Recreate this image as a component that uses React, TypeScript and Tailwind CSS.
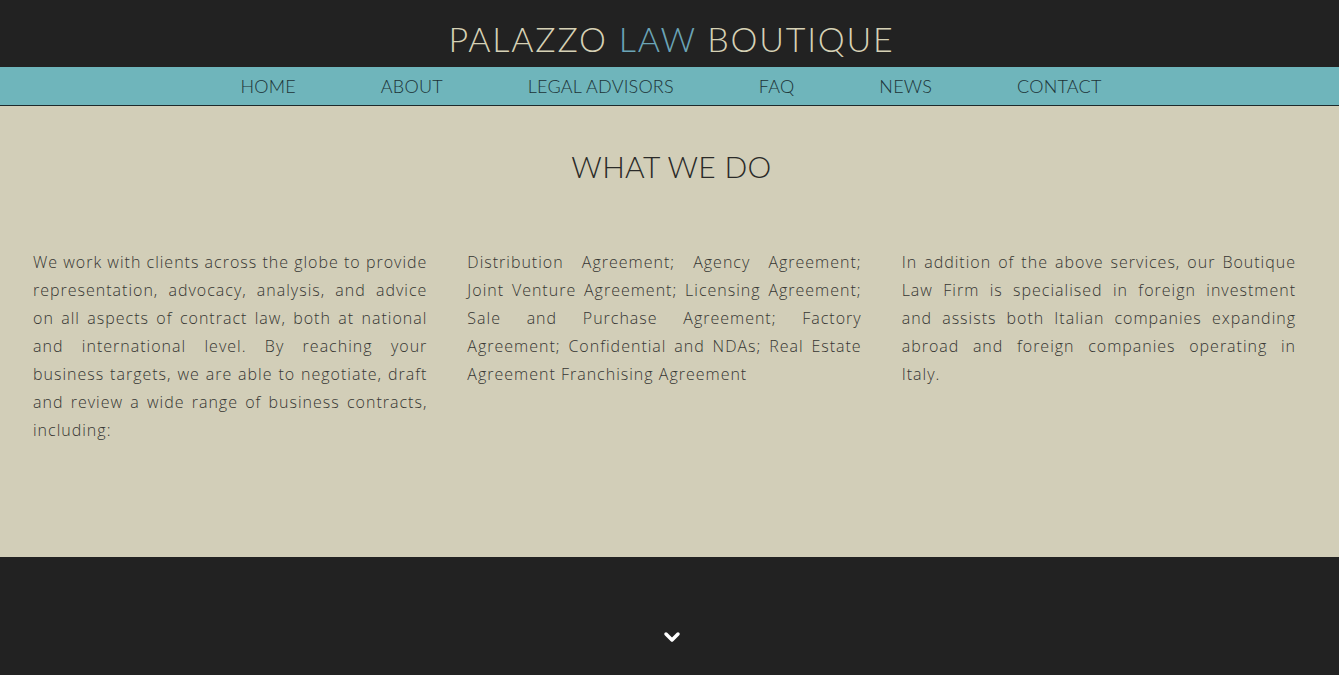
import { ChevronDown } from "lucide-react";

const navItems = ["HOME", "ABOUT", "LEGAL ADVISORS", "FAQ", "NEWS", "CONTACT"];

const columns = [
  "We work with clients across the globe to provide representation, advocacy, analysis, and advice on all aspects of contract law, both at national and international level. By reaching your business targets, we are able to negotiate, draft and review a wide range of business contracts, including:",
  "Distribution Agreement; Agency Agreement; Joint Venture Agreement; Licensing Agreement; Sale and Purchase Agreement; Factory Agreement; Confidential and NDAs; Real Estate Agreement Franchising Agreement",
  "In addition of the above services, our Boutique Law Firm is specialised in foreign investment and assists both Italian companies expanding abroad and foreign companies operating in Italy.",
];

export default function App() {
  return (
    <div className="min-h-screen bg-[#222222] font-['Open_Sans',sans-serif]">
      <header className="h-[67px] flex items-center justify-center">
        <h1 className="font-['Lato',sans-serif] font-light text-[34px] tracking-[1.8px] text-[#d6d1b5] leading-none pt-[10px] pl-[4px]">
          PALAZZO <span className="text-[#6ba4b6]">LAW</span> BOUTIQUE
        </h1>
      </header>

      <nav className="h-[39px] bg-[#6fb5bb] border-b border-[#1e2a2c] flex items-center justify-center gap-[85px] pl-[3px]">
        {navItems.map((item) => (
          <a
            key={item}
            href="#"
            className="font-['Lato',sans-serif] font-light text-[18px] tracking-[0.2px] text-[#1c3337] leading-none"
          >
            {item}
          </a>
        ))}
      </nav>

      <main className="bg-[#d2ceb8] h-[451px] pl-[33px] pr-[43px]">
        <h2 className="text-center font-['Lato',sans-serif] font-light text-[30px] tracking-[0.3px] text-[#2a2a28] pt-[45px] leading-none pl-[14px]">
          WHAT WE DO
        </h2>
        <div className="grid grid-cols-3 gap-x-[40px] mt-[67px]">
          {columns.map((text, index) => (
            <p
              key={index}
              className="text-justify text-[16px] leading-[28px] font-light tracking-[1px] text-[#363633]"
            >
              {text}
            </p>
          ))}
        </div>
      </main>

      <footer className="h-[118px] flex justify-center pt-[68px] pl-[4px]">
        <ChevronDown className="text-white w-[24px] h-[24px]" strokeWidth={3.5} />
      </footer>
    </div>
  );
}
